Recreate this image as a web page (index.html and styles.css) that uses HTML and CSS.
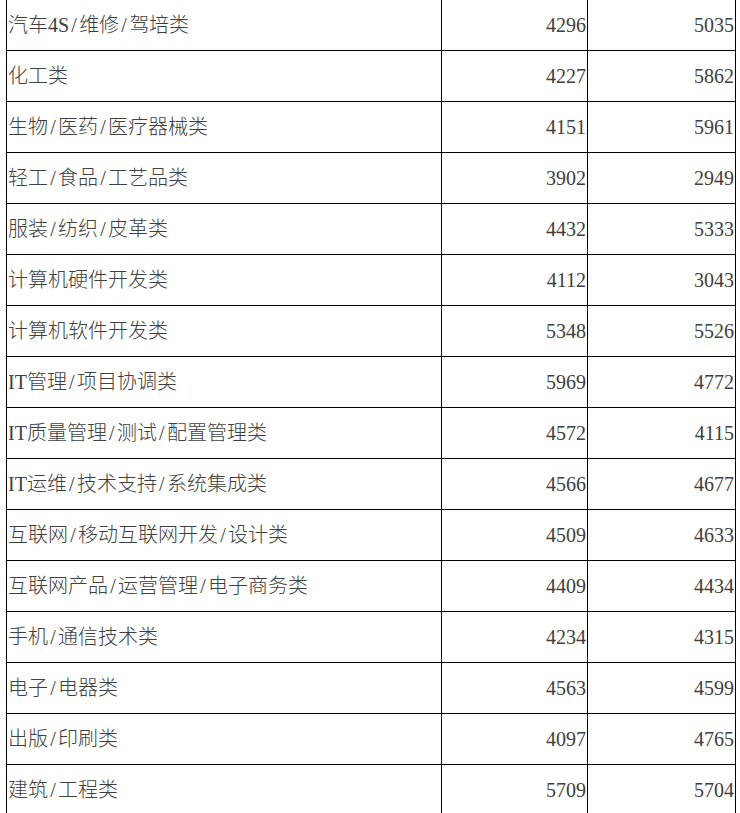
FILE: index.html
```html
<!DOCTYPE html>
<html lang="zh-CN">
<head>
<meta charset="utf-8">
<title>薪资表</title>
<link rel="stylesheet" href="styles.css">
</head>
<body>
<table class="salary">
<tbody>
<tr><td class="name">汽车4S<span class="sep">/</span>维修<span class="sep">/</span>驾培类</td><td class="num">4296</td><td class="num">5035</td></tr>
<tr><td class="name">化工类</td><td class="num">4227</td><td class="num">5862</td></tr>
<tr><td class="name">生物<span class="sep">/</span>医药<span class="sep">/</span>医疗器械类</td><td class="num">4151</td><td class="num">5961</td></tr>
<tr><td class="name">轻工<span class="sep">/</span>食品<span class="sep">/</span>工艺品类</td><td class="num">3902</td><td class="num">2949</td></tr>
<tr><td class="name">服装<span class="sep">/</span>纺织<span class="sep">/</span>皮革类</td><td class="num">4432</td><td class="num">5333</td></tr>
<tr><td class="name">计算机硬件开发类</td><td class="num">4112</td><td class="num">3043</td></tr>
<tr><td class="name">计算机软件开发类</td><td class="num">5348</td><td class="num">5526</td></tr>
<tr><td class="name">IT管理<span class="sep">/</span>项目协调类</td><td class="num">5969</td><td class="num">4772</td></tr>
<tr><td class="name">IT质量管理<span class="sep">/</span>测试<span class="sep">/</span>配置管理类</td><td class="num">4572</td><td class="num">4115</td></tr>
<tr><td class="name">IT运维<span class="sep">/</span>技术支持<span class="sep">/</span>系统集成类</td><td class="num">4566</td><td class="num">4677</td></tr>
<tr><td class="name">互联网<span class="sep">/</span>移动互联网开发<span class="sep">/</span>设计类</td><td class="num">4509</td><td class="num">4633</td></tr>
<tr><td class="name">互联网产品<span class="sep">/</span>运营管理<span class="sep">/</span>电子商务类</td><td class="num">4409</td><td class="num">4434</td></tr>
<tr><td class="name">手机<span class="sep">/</span>通信技术类</td><td class="num">4234</td><td class="num">4315</td></tr>
<tr><td class="name">电子<span class="sep">/</span>电器类</td><td class="num">4563</td><td class="num">4599</td></tr>
<tr><td class="name">出版<span class="sep">/</span>印刷类</td><td class="num">4097</td><td class="num">4765</td></tr>
<tr class="last"><td class="name">建筑<span class="sep">/</span>工程类</td><td class="num">5709</td><td class="num">5704</td></tr>
</tbody>
</table>
</body>
</html>
```
FILE: styles.css
```css
html, body {
  margin: 0;
  padding: 0;
  background: #ffffff;
  overflow: hidden;
}

.salary {
  border-collapse: collapse;
  margin: -1px 0 0 6px;
  table-layout: fixed;
  width: 729px;
  font-family: "Liberation Serif", "Noto Sans CJK SC", serif;
  font-size: 20px;
  color: #404040;
}

.salary td {
  border: 1px solid #000000;
  height: 50px;
  padding: 0 1px;
  box-sizing: border-box;
  vertical-align: top;
  line-height: 50px;
  white-space: nowrap;
}

.salary td.name {
  width: 435px;
  text-align: left;
  font-weight: 300;
}

.salary .sep {
  display: inline-block;
  width: 10px;
  text-align: center;
}

.salary td.num {
  text-align: right;
}

.salary td.num:nth-child(2) {
  width: 146px;
}

.salary td.num:nth-child(3) {
  width: 148px;
}

.salary tr.last td {
  height: 47px;
}
```
